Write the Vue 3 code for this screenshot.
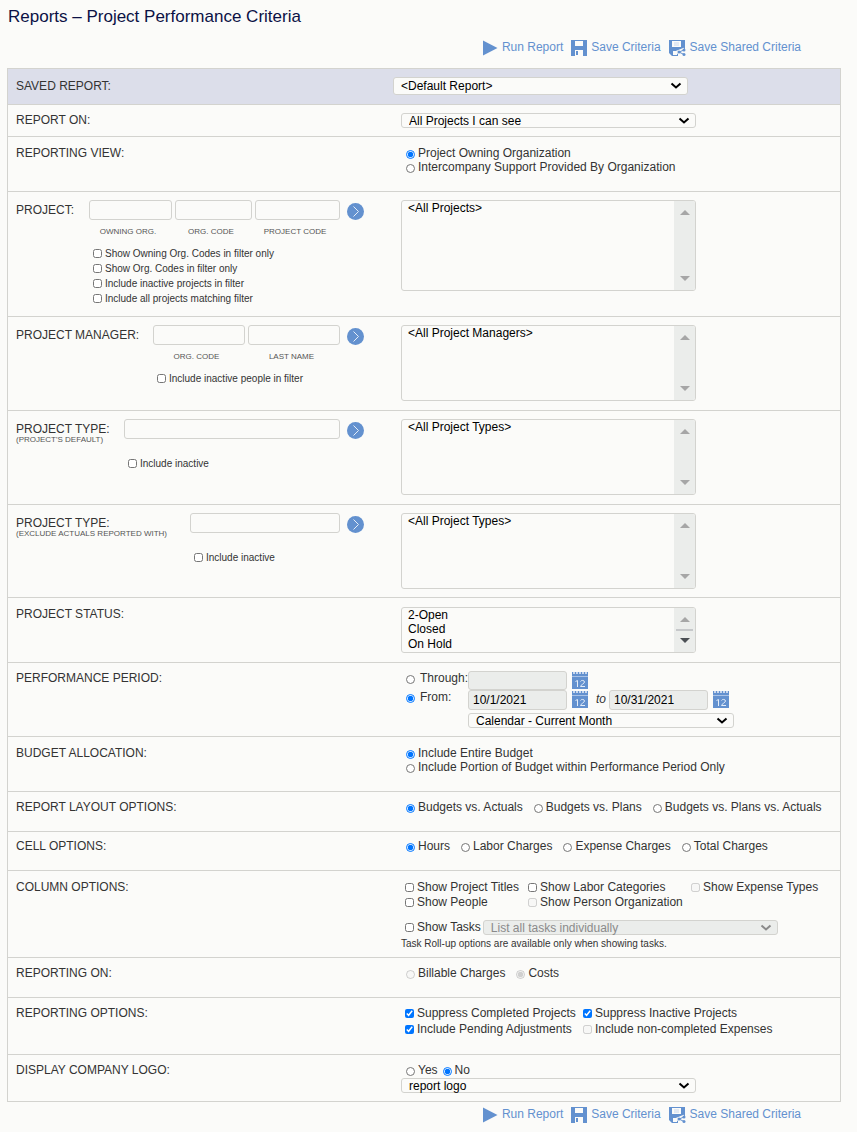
<script setup>
import { reactive } from 'vue'

const form = reactive({
  saved: 'default',
  reportOn: 'all',
  view: 'owning',
  period: 'from',
  through: '',
  from: '10/1/2021',
  to: '10/31/2021',
  range: 'month',
  budget: 'entire',
  layout: 'ba',
  cell: 'hours',
  tasks: 'individual',
  charge: 'costs',
  logo: 'no',
  logoFile: 'report'
})

const filters = [
  {
    id: 'project',
    label: 'PROJECT:',
    fields: [
      { id: 'p-owning', caption: 'OWNING ORG.', width: 83 },
      { id: 'p-org', caption: 'ORG. CODE', width: 77 },
      { id: 'p-code', caption: 'PROJECT CODE', width: 85 }
    ],
    checks: [
      'Show Owning Org. Codes in filter only',
      'Show Org. Codes in filter only',
      'Include inactive projects in filter',
      'Include all projects matching filter'
    ],
    all: '<All Projects>',
    size: 'tall'
  },
  {
    id: 'manager',
    label: 'PROJECT MANAGER:',
    fields: [
      { id: 'm-org', caption: 'ORG. CODE', width: 92 },
      { id: 'm-last', caption: 'LAST NAME', width: 92 }
    ],
    checks: ['Include inactive people in filter'],
    all: '<All Project Managers>',
    size: 'medium'
  },
  {
    id: 'type',
    label: 'PROJECT TYPE:',
    note: "(PROJECT'S DEFAULT)",
    fields: [{ id: 't-name', width: 216 }],
    checks: ['Include inactive'],
    all: '<All Project Types>',
    size: 'medium'
  },
  {
    id: 'extype',
    label: 'PROJECT TYPE:',
    note: '(EXCLUDE ACTUALS REPORTED WITH)',
    fields: [{ id: 'x-name', width: 150 }],
    checks: ['Include inactive'],
    all: '<All Project Types>',
    size: 'medium'
  }
]
const layouts = [
  ['ba', 'Budgets vs. Actuals'],
  ['bp', 'Budgets vs. Plans'],
  ['bpa', 'Budgets vs. Plans vs. Actuals']
]
const cells = [
  ['hours', 'Hours'],
  ['labor', 'Labor Charges'],
  ['expense', 'Expense Charges'],
  ['total', 'Total Charges']
]
</script>

<template>
  <svg class="defs" aria-hidden="true">
    <symbol id="i-run" viewBox="0 0 16 16"><path d="M1 .5 15.500 8 1 15.500z" fill="#6391cf" /></symbol>
    <symbol id="i-save" viewBox="0 0 16 16">
      <path d="M0 0h16v16H0z" fill="#6391cf" />
      <path d="M4 0h8v6H4zM4 10h8v6H4z" fill="#fbfbf9" />
      <path d="M4 0h8v1H4zM5 11h2v4H5z" fill="#6391cf" />
    </symbol>
    <symbol id="i-share" viewBox="0 0 17 16">
      <path d="M0 0h16v9l-7 3v4H3l-3-3z" fill="#6391cf" />
      <path d="M3 1h9v6H3zM4 11h4v4H4z" fill="#fbfbf9" />
      <path d="M5 3h5M5 5h5" stroke="#c9d8ee" />
      <path d="m15.500 9.500-6 2.500 6 2.500" stroke="#fbfbf9" stroke-width="4" fill="none" />
      <path d="m15 10-5 2 5 2.500" stroke="#6391cf" fill="none" />
      <circle cx="15" cy="10" r="1.500" fill="#6391cf" /><circle cx="10" cy="12" r="1.500" fill="#6391cf" /><circle cx="15" cy="14.500" r="1.500" fill="#6391cf" />
    </symbol>
    <symbol id="i-go" viewBox="0 0 17 17">
      <circle cx="8.500" cy="8.500" r="8.500" fill="#6391cf" />
      <path d="m6.500 3.500 5 5-5 5" stroke="#e4edf8" fill="none" />
    </symbol>
    <symbol id="i-cal" viewBox="0 0 16 17">
      <path d="M0 0h16v17H0z" fill="#6391cf" />
      <path d="M0 4.500h16" stroke="#a9c2e6" />
      <path d="M1 1h14" stroke="#c9d8ee" stroke-width="2" stroke-dasharray="2 1" />
      <path d="M3.500 9.500 5.500 8.500v6.500M8.500 9.500c.5-1.500 4-1.500 4 .5 0 1.500-4 3-4 4.500h4.500" stroke="#e4edf8" fill="none" />
    </symbol>
    <symbol id="i-chev" viewBox="0 0 12 8"><path d="m1.500 1.500 4.500 4 4.500-4" stroke="currentColor" stroke-width="2" fill="none" /></symbol>
  </svg>

  <main class="page">
    <h1>Reports – Project Performance Criteria</h1>
    <nav class="actions" aria-label="Report actions">
      <a href="#run"><svg><use href="#i-run" /></svg>Run Report</a>
      <a href="#save"><svg><use href="#i-save" /></svg>Save Criteria</a>
      <a href="#share"><svg class="wide"><use href="#i-share" /></svg>Save Shared Criteria</a>
    </nav>

    <form class="panel" @submit.prevent>
      <div class="row saved">
        <label class="title" for="saved">SAVED REPORT:</label>
        <div>
          <div class="drop large">
            <select id="saved" v-model="form.saved"><option value="default">&lt;Default Report&gt;</option></select>
            <svg><use href="#i-chev" /></svg>
          </div>
        </div>
      </div>

      <div class="row on">
        <label class="title" for="report-on">REPORT ON:</label>
        <div>
          <div class="drop">
            <select id="report-on" v-model="form.reportOn"><option value="all">All Projects I can see</option></select>
            <svg><use href="#i-chev" /></svg>
          </div>
        </div>
      </div>

      <div class="row double" role="radiogroup" aria-labelledby="view-title">
        <span id="view-title" class="title">REPORTING VIEW:</span>
        <div>
          <label class="pick"><input v-model="form.view" type="radio" name="view" value="owning" />Project Owning Organization</label>
          <label class="pick"><input v-model="form.view" type="radio" name="view" value="inter" />Intercompany Support Provided By Organization</label>
        </div>
      </div>

      <div v-for="f in filters" :key="f.id" class="row filter" :class="[f.size, f.id]">
        <div class="criteria">
          <label class="title" :for="f.fields[0].id">{{ f.label }}<small v-if="f.note">{{ f.note }}</small></label>
          <div class="search">
            <div class="fields">
              <div v-for="x in f.fields" :key="x.id" :style="{ width: x.width + 'px' }">
                <input :id="x.id" class="text" type="text" :aria-label="x.caption || f.label" />
                <label v-if="x.caption" class="caption" :for="x.id">{{ x.caption }}</label>
              </div>
            </div>
            <div class="checks" :class="{ apart: f.note }">
              <label v-for="c in f.checks" :key="c" class="check small"><input type="checkbox" />{{ c }}</label>
            </div>
          </div>
          <button class="go" type="button" aria-label="Find"><svg><use href="#i-go" /></svg></button>
        </div>
        <div>
          <div class="list" :class="f.size">
            <select size="4" multiple :aria-label="f.label"><option>{{ f.all }}</option></select>
            <span class="bar"><i class="up"></i><i class="down"></i></span>
          </div>
        </div>
      </div>

      <div class="row status">
        <label class="title" for="status">PROJECT STATUS:</label>
        <div>
          <div class="list short">
            <select id="status" size="3" multiple><option>2-Open</option><option>Closed</option><option>On Hold</option></select>
            <span class="bar"><i class="up"></i><i class="thumb"></i><i class="down active"></i></span>
          </div>
        </div>
      </div>

      <div class="row period" role="group" aria-labelledby="period-title">
        <span id="period-title" class="title">PERFORMANCE PERIOD:</span>
        <div>
          <div class="dates">
            <label class="pick"><input v-model="form.period" type="radio" name="period" value="through" />Through:</label>
            <input v-model="form.through" class="text" type="text" aria-label="Through date" disabled />
            <button type="button" aria-label="Pick through date"><svg><use href="#i-cal" /></svg></button>
          </div>
          <div class="dates">
            <label class="pick"><input v-model="form.period" type="radio" name="period" value="from" />From:</label>
            <input v-model="form.from" class="text" type="text" aria-label="From date" readonly />
            <button type="button" aria-label="Pick from date"><svg><use href="#i-cal" /></svg></button>
            <label class="to" for="to-date">to</label>
            <input id="to-date" v-model="form.to" class="text" type="text" readonly />
            <button type="button" aria-label="Pick to date"><svg><use href="#i-cal" /></svg></button>
          </div>
          <div class="drop range">
            <select v-model="form.range" aria-label="Date range"><option value="month">Calendar - Current Month</option></select>
            <svg><use href="#i-chev" /></svg>
          </div>
        </div>
      </div>

      <div class="row double" role="radiogroup" aria-labelledby="budget-title">
        <span id="budget-title" class="title">BUDGET ALLOCATION:</span>
        <div>
          <label class="pick"><input v-model="form.budget" type="radio" name="budget" value="entire" />Include Entire Budget</label>
          <label class="pick"><input v-model="form.budget" type="radio" name="budget" value="portion" />Include Portion of Budget within Performance Period Only</label>
        </div>
      </div>

      <div class="row single" role="radiogroup" aria-labelledby="layout-title">
        <span id="layout-title" class="title">REPORT LAYOUT OPTIONS:</span>
        <div class="line">
          <label v-for="[v, t] in layouts" :key="v" class="pick"><input v-model="form.layout" type="radio" name="layout" :value="v" />{{ t }}</label>
        </div>
      </div>

      <div class="row cell" role="radiogroup" aria-labelledby="cell-title">
        <span id="cell-title" class="title">CELL OPTIONS:</span>
        <div class="line">
          <label v-for="[v, t] in cells" :key="v" class="pick"><input v-model="form.cell" type="radio" name="cell" :value="v" />{{ t }}</label>
        </div>
      </div>

      <div class="row columns" role="group" aria-labelledby="column-title">
        <span id="column-title" class="title">COLUMN OPTIONS:</span>
        <div>
          <div class="three">
            <label class="check"><input type="checkbox" />Show Project Titles</label>
            <label class="check"><input type="checkbox" />Show Labor Categories</label>
            <label class="check"><input type="checkbox" disabled />Show Expense Types</label>
            <label class="check"><input type="checkbox" />Show People</label>
            <label class="check"><input type="checkbox" disabled />Show Person Organization</label>
          </div>
          <div class="tasks">
            <label class="check"><input type="checkbox" />Show Tasks</label>
            <div class="drop off">
              <select v-model="form.tasks" aria-label="Task roll-up" disabled><option value="individual">List all tasks individually</option></select>
              <svg><use href="#i-chev" /></svg>
            </div>
          </div>
          <p class="hint">Task Roll-up options are available only when showing tasks.</p>
        </div>
      </div>

      <div class="row single" role="radiogroup" aria-labelledby="charge-title">
        <span id="charge-title" class="title">REPORTING ON:</span>
        <div class="line">
          <label class="pick"><input v-model="form.charge" type="radio" name="charge" value="billable" disabled />Billable Charges</label>
          <label class="pick"><input v-model="form.charge" type="radio" name="charge" value="costs" disabled />Costs</label>
        </div>
      </div>

      <div class="row options" role="group" aria-labelledby="options-title">
        <span id="options-title" class="title">REPORTING OPTIONS:</span>
        <div class="two">
          <label class="check"><input type="checkbox" checked />Suppress Completed Projects</label>
          <label class="check"><input type="checkbox" checked />Suppress Inactive Projects</label>
          <label class="check"><input type="checkbox" checked />Include Pending Adjustments</label>
          <label class="check"><input type="checkbox" disabled />Include non-completed Expenses</label>
        </div>
      </div>

      <div class="row logo" role="group" aria-labelledby="logo-title">
        <span id="logo-title" class="title">DISPLAY COMPANY LOGO:</span>
        <div>
          <div class="line tight">
            <label class="pick"><input v-model="form.logo" type="radio" name="logo" value="yes" />Yes</label>
            <label class="pick"><input v-model="form.logo" type="radio" name="logo" value="no" />No</label>
          </div>
          <div class="drop">
            <select v-model="form.logoFile" aria-label="Logo"><option value="report">report logo</option></select>
            <svg><use href="#i-chev" /></svg>
          </div>
        </div>
      </div>
    </form>

    <nav class="actions bottom" aria-label="Report actions, bottom">
      <a href="#run"><svg><use href="#i-run" /></svg>Run Report</a>
      <a href="#save"><svg><use href="#i-save" /></svg>Save Criteria</a>
      <a href="#share"><svg class="wide"><use href="#i-share" /></svg>Save Shared Criteria</a>
    </nav>
  </main>
</template>

<style>
body {
  background: #fbfbf9;
}
</style>

<style scoped>
.defs {
  position: absolute;
  width: 0;
  height: 0;
}
.page,
.page input,
.page select {
  font-family: "Liberation Sans", Arial, sans-serif;
  font-size: 12px;
}
.page {
  padding: 8px 16px 8px 7px;
  line-height: 14px;
  color: #333;
  box-sizing: border-box;
}
.page * {
  box-sizing: border-box;
}
.page h1 {
  margin: 0 0 12px 1px;
  font-size: 17px;
  line-height: 18px;
  font-weight: 400;
  color: #0b1145;
}
.actions {
  display: flex;
  justify-content: flex-end;
  gap: 8px;
  padding-right: 40px;
  margin-bottom: 12px;
}
.actions.bottom {
  margin: 3px 0 0;
}
.actions a {
  display: flex;
  align-items: center;
  gap: 4px;
  line-height: 18px;
  color: #6391cf;
  text-decoration: none;
}
.actions svg {
  width: 16px;
  height: 16px;
  margin-top: 2px;
}
.actions svg.wide {
  width: 17px;
}
.panel {
  border: 1px solid #d3d3cf;
}
.row {
  display: grid;
  grid-template-columns: 393px 1fr;
  align-items: start;
  padding: 8px 0;
}
.row + .row {
  border-top: 1px solid #d3d3cf;
}
.row > .title,
.criteria > .title {
  padding-left: 8px;
}
.saved {
  background: #dcdeea;
  grid-template-columns: 385px 1fr;
  padding-bottom: 9px;
}
.saved .title {
  padding-top: 2px;
}
.row.double {
  padding: 9px 0 17px;
}
.row.single,
.row.options {
  padding-bottom: 17px;
}
.row.cell {
  padding: 7px 0 17px;
}
.row.filter {
  padding-bottom: 9px;
}
.row.filter.tall {
  padding-bottom: 10px;
}
.row.filter.extype {
  padding-bottom: 8px;
}
.row.status {
  padding: 9px 0;
}
.title small {
  display: block;
  font-size: 8px;
  line-height: 8px;
  color: #555;
}

.drop {
  display: grid;
  align-items: center;
  width: 295px;
  height: 15px;
  color: #000;
  background: #fbfbf9;
  border: 1px solid #d3d3cf;
  border-radius: 3px;
}
.drop.large {
  height: 18px;
}
.drop.off {
  background: #ebedeb;
  color: #8a8a8a;
}
.drop select {
  grid-area: 1 / 1;
  width: 100%;
  height: 16px;
  margin: -2px 0;
  padding: 0 7px;
  appearance: none;
  border: 0;
  background: none;
  color: inherit;
  opacity: 1;
}
.drop svg {
  grid-area: 1 / 1;
  justify-self: end;
  width: 12px;
  height: 8px;
  margin-right: 5px;
  pointer-events: none;
}
.text {
  display: block;
  width: 100%;
  height: 20px;
  padding: 0 4px;
  color: #000;
  background: #fbfbf9;
  border: 1px solid #d3d3cf;
  border-radius: 3px;
}

.pick,
.check {
  display: flex;
  gap: 3px;
}
.pick input {
  flex: none;
  width: 9px;
  height: 9px;
  margin: 4px 0 0 5px;
}
.check {
  line-height: 15px;
}
.check input {
  flex: none;
  width: 9px;
  height: 9px;
  margin: 3px 0 0 4px;
}
.small {
  font-size: 10px;
}
.line {
  display: flex;
  gap: 6px;
}
.line.tight {
  gap: 0;
  margin-bottom: 1px;
}

.criteria {
  display: flex;
  align-items: flex-start;
  padding-right: 37px;
}
.criteria > .title {
  padding-top: 3px;
}
.search {
  margin-left: auto;
}
.fields {
  display: flex;
  gap: 3px;
}
.caption {
  display: block;
  margin-top: 7px;
  padding-right: 5px;
  font-size: 8px;
  line-height: 10px;
  text-align: center;
  color: #555;
}
.checks {
  margin-top: 9px;
}
.checks.apart {
  margin-top: 17px;
}
button {
  padding: 0;
  border: 0;
  background: none;
}
button svg {
  display: block;
  width: 16px;
  height: 17px;
}
.go {
  margin: 3px 0 0 7px;
}
.go svg {
  width: 17px;
}

.list {
  display: flex;
  width: 295px;
  overflow: hidden;
  border: 1px solid #d3d3cf;
  border-radius: 3px;
}
.list.tall {
  height: 91px;
}
.list.medium {
  height: 76px;
}
.list.short {
  height: 46px;
}
.list select {
  flex: 1;
  height: 100%;
  padding: 0;
  border: 0;
  background: none;
  color: #000;
  overflow: hidden;
}
.list option {
  padding: 0 6px;
  color: #000;
}
.bar {
  display: flex;
  flex-direction: column;
  align-items: center;
  justify-content: space-between;
  width: 21px;
  padding: 9px 0;
  background: #ebedeb;
}
.up,
.down {
  border: 5px solid transparent;
  border-top-width: 0;
  border-bottom-color: #a6a6a6;
}
.down {
  border-width: 5px 5px 0;
  border-color: #a6a6a6 transparent transparent;
}
.down.active {
  border-top-color: #4b4f54;
}
.thumb {
  width: 17px;
  height: 2px;
  background: #c6c8ca;
}

.dates {
  display: flex;
  align-items: flex-start;
}
.dates .pick {
  width: 67px;
  gap: 5px;
}
.dates .text {
  width: 99px;
  background: #ebedeb;
}
.dates .text:disabled {
  height: 19px;
}
.dates button {
  margin: 1px 0 0 5px;
}
.to {
  padding: 2px 3px 0 8px;
  font-style: italic;
}
.drop.range {
  width: 266px;
  margin: 3px 0 0 67px;
}
.row.columns {
  padding: 9px 0 6px;
}
.three {
  display: grid;
  grid-template-columns: 123px 163px 1fr;
}
.tasks {
  display: flex;
  gap: 2px;
  margin-top: 10px;
}
.hint {
  margin: 2px 0 0;
  font-size: 10px;
}
.two {
  display: grid;
  grid-template-columns: 178px 1fr;
  row-gap: 1px;
}
</style>
